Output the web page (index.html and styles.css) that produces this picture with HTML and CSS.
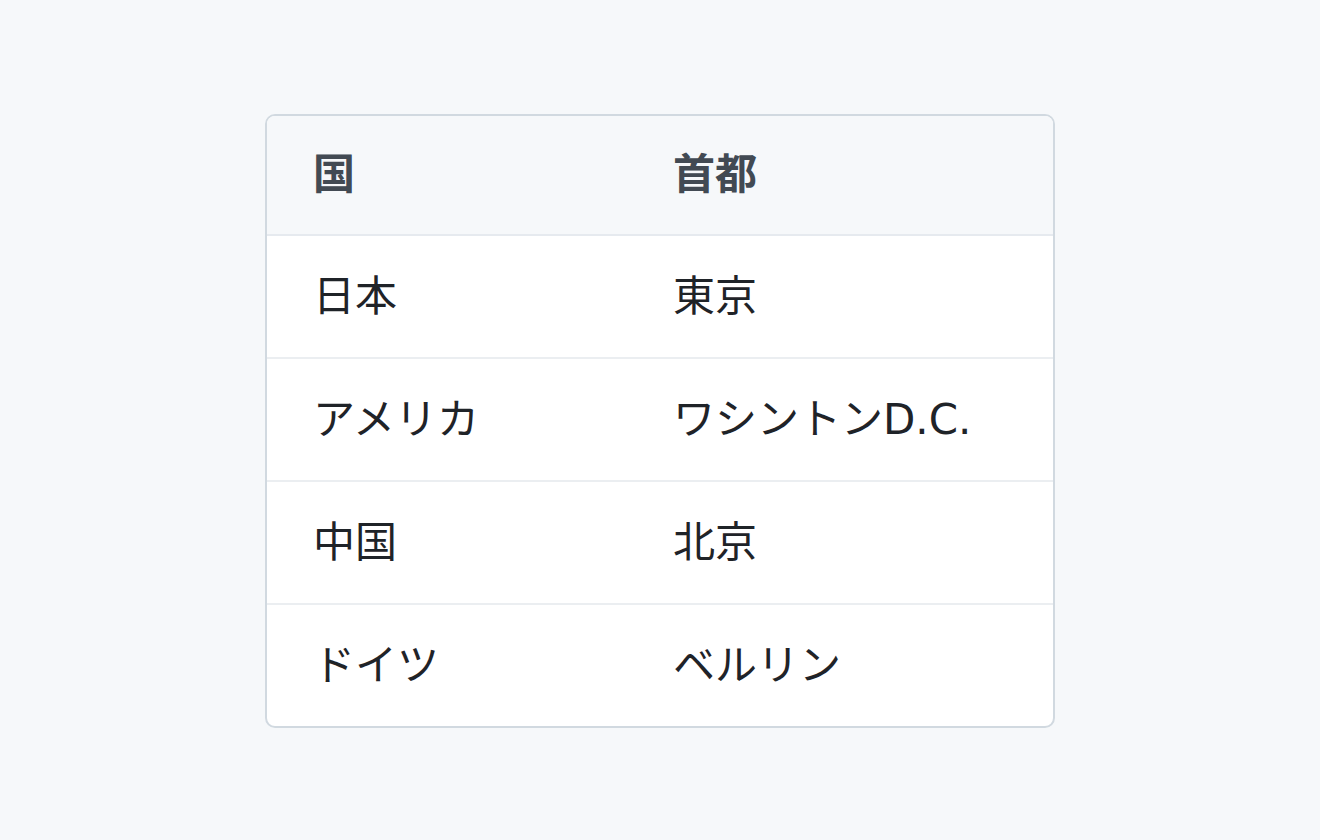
FILE: index.html
```html
<!DOCTYPE html>
<html lang="ja">
<head>
    <meta charset="UTF-8">
    <meta name="viewport" content="width=device-width, initial-scale=1.0">
    <title>首都</title>
    <link rel="stylesheet" href="styles.css">
</head>
<body>
    <div class="page">
        <table class="capitals">
            <thead>
                <tr>
                    <th>国</th>
                    <th>首都</th>
                </tr>
            </thead>
            <tbody>
                <tr>
                    <td>日本</td>
                    <td>東京</td>
                </tr>
                <tr>
                    <td>アメリカ</td>
                    <td>ワシントンD.C.</td>
                </tr>
                <tr>
                    <td>中国</td>
                    <td>北京</td>
                </tr>
                <tr>
                    <td>ドイツ</td>
                    <td>ベルリン</td>
                </tr>
            </tbody>
        </table>
    </div>
</body>
</html>
```

FILE: styles.css
```css
* {
    padding: 0;
    margin: 0;
    box-sizing: border-box;
}
body {
    background-color: #f6f8fa;
    font-family: "DejaVu Sans", "Noto Sans CJK JP", sans-serif;
    color: #1f2328;
}
.page {
    display: flex;
    justify-content: center;
    padding-top: 114px;
}
.capitals {
    width: 790px;
    border: 2px solid #d1d9e0;
    border-radius: 10px;
    border-spacing: 0;
    overflow: hidden;
    background-color: #fff;
    font-size: 42px;
}
.capitals th,
.capitals td {
    text-align: left;
    padding: 0 46px;
    line-height: 1;
}
.capitals th {
    height: 120px;
    background-color: #f6f8fa;
    color: #424a53;
    font-weight: 700;
    border-bottom: 2px solid #e6eaef;
}
.capitals th:first-child,
.capitals td:first-child {
    width: 360px;
}
.capitals td {
    height: 123px;
    font-weight: 400;
    border-bottom: 2px solid #ebeef1;
}
.capitals tbody tr:last-child td {
    border-bottom: none;
    height: 121px;
}
```
